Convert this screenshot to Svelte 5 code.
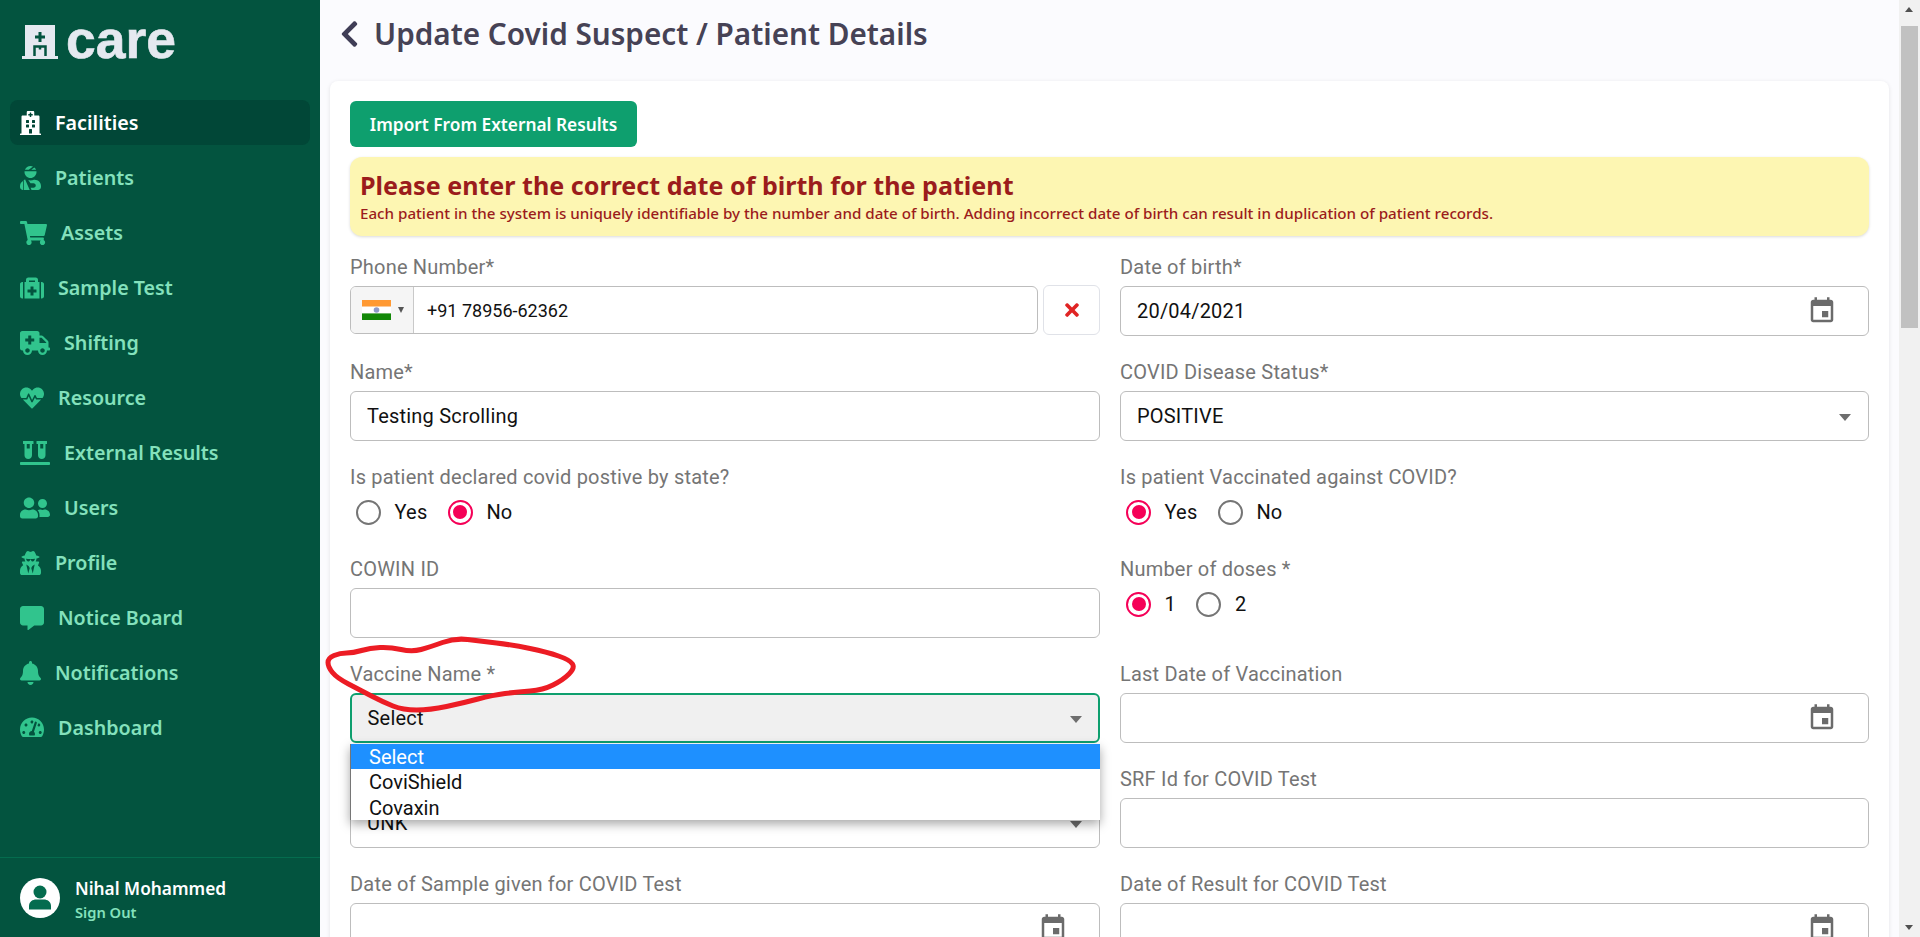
<script>
  const nav = [
    { label: 'Facilities', w: 448, active: true, d: 'M448 492v20H0v-20c0-6.627 5.373-12 12-12h20V120c0-13.255 10.745-24 24-24h88V24c0-13.255 10.745-24 24-24h112c13.255 0 24 10.745 24 24v72h88c13.255 0 24 10.745 24 24v360h20c6.627 0 12 5.373 12 12zM308 192h-40c-6.627 0-12 5.373-12 12v40c0 6.627 5.373 12 12 12h40c6.627 0 12-5.373 12-12v-40c0-6.627-5.373-12-12-12zm-168 64h40c6.627 0 12-5.373 12-12v-40c0-6.627-5.373-12-12-12h-40c-6.627 0-12 5.373-12 12v40c0 6.627 5.373 12 12 12zm104 128h-40c-6.627 0-12 5.373-12 12v84h64v-84c0-6.627-5.373-12-12-12zm64-96h-40c-6.627 0-12 5.373-12 12v40c0 6.627 5.373 12 12 12h40c6.627 0 12-5.373 12-12v-40c0-6.627-5.373-12-12-12zm-116 12c0-6.627-5.373-12-12-12h-40c-6.627 0-12 5.373-12 12v40c0 6.627 5.373 12 12 12h40c6.627 0 12-5.373 12-12v-40zM182 96h26v26a6 6 0 0 0 6 6h20a6 6 0 0 0 6-6V96h26a6 6 0 0 0 6-6V70a6 6 0 0 0-6-6h-26V38a6 6 0 0 0-6-6h-20a6 6 0 0 0-6 6v26h-26a6 6 0 0 0-6 6v20a6 6 0 0 0 6 6z' },
    { label: 'Patients', w: 448, d: 'M277.37 11.98C261.08 4.47 243.11 0 224 0c-53.69 0-99.5 33.13-118.51 80h81.19l90.69-68.02zM342.51 80c-7.9-19.47-20.67-36.2-36.49-49.52L239.99 80h102.52zM224 256c70.69 0 128-57.31 128-128 0-5.48-.95-10.7-1.61-16H97.61c-.67 5.3-1.61 10.52-1.61 16 0 70.69 57.31 128 128 128zM80 299.7V512h128.26l-98.45-221.52C99.5 292 89.5 295 80 299.7zM0 448c0 35.35 28.65 64 64 64V318.7C26.38 339.4 0 379.2 0 426.02V448zm246.68 64H384c35.35 0 64-28.65 64-64v-21.98c0-74.16-60.12-134.02-134.4-134.02h-16.7c-22.2 10.2-46.9 16-72.9 16-16.6 0-32.6-2.4-47.8-6.8L224 368h64c26.5 0 48 21.5 48 48s-21.5 48-48 48h-62.6z' },
    { label: 'Assets', w: 576, d: 'M528.12 301.319l47.273-208C578.806 78.301 567.391 64 551.99 64H159.208l-9.166-44.81C147.758 8.021 137.93 0 126.529 0H24C10.745 0 0 10.745 0 24v16c0 13.255 10.745 24 24 24h69.883l70.248 343.435C147.325 417.1 136 435.222 136 456c0 30.928 25.072 56 56 56s56-25.072 56-56c0-15.674-6.447-29.835-16.824-40h209.647C430.447 426.165 424 440.326 424 456c0 30.928 25.072 56 56 56s56-25.072 56-56c0-22.172-12.888-41.332-31.579-50.405l5.517-24.276c3.413-15.018-8.002-29.319-23.403-29.319H218.117l-6.545-32h293.145c11.206 0 20.92-7.754 23.403-18.681z' },
    { label: 'Sample Test', w: 512, d: 'M96 480h320V128h-32V80c0-26.51-21.49-48-48-48H176c-26.51 0-48 21.49-48 48v48H96v352zm96-384h128v32H192V96zm160 248c0 4.418-3.582 8-8 8h-56v56c0 4.418-3.582 8-8 8h-48c-4.418 0-8-3.582-8-8v-56h-56c-4.418 0-8-3.582-8-8v-48c0-4.418 3.582-8 8-8h56v-56c0-4.418 3.582-8 8-8h48c4.418 0 8 3.582 8 8v56h56c4.418 0 8 3.582 8 8v48zm160-216v304c0 26.51-21.49 48-48 48h-16V128h16c26.51 0 48 21.49 48 48zM48 128h16v352H48c-26.51 0-48-21.49-48-48V176c0-26.51 21.49-48 48-48z' },
    { label: 'Shifting', w: 640, d: 'M624 352h-16V243.9c0-12.7-5.1-24.9-14.1-33.9L494 110.1c-9-9-21.2-14.1-33.9-14.1H416V48c0-26.5-21.5-48-48-48H48C21.5 0 0 21.5 0 48v320c0 26.5 21.5 48 48 48h16c0 53 43 96 96 96s96-43 96-96h128c0 53 43 96 96 96s96-43 96-96h48c8.8 0 16-7.2 16-16v-32c0-8.8-7.2-16-16-16zM160 464c-26.5 0-48-21.5-48-48s21.5-48 48-48 48 21.5 48 48-21.5 48-48 48zm144-248c0 4.4-3.6 8-8 8h-56v56c0 4.4-3.6 8-8 8h-48c-4.4 0-8-3.6-8-8v-56h-56c-4.4 0-8-3.6-8-8v-48c0-4.4 3.6-8 8-8h56v-56c0-4.4 3.6-8 8-8h48c4.4 0 8 3.6 8 8v56h56c4.4 0 8 3.6 8 8v48zm176 248c-26.5 0-48-21.5-48-48s21.5-48 48-48 48 21.5 48 48-21.5 48-48 48zm80-208H416V144h44.1l99.9 99.9V256z' },
    { label: 'Resource', w: 512, d: 'M320.2 243.8l-49.7 99.4c-6 12.1-23.4 11.7-28.9-.6l-56.9-126.3-30 71.7H60.6l182.5 186.5c7.1 7.3 18.6 7.3 25.7 0L451.4 288H342.3l-22.1-44.2zM473.7 73.9l-2.4-2.5c-51.5-52.6-135.8-52.6-187.4 0L256 100l-27.9-28.5c-51.5-52.7-135.9-52.7-187.4 0l-2.4 2.4C-10.4 123.7-12.5 203 31 256h102.4l35.9-86.2c5.4-12.9 23.6-13.2 29.4-.4l58.2 129.3 49-97.9c5.9-11.8 22.7-11.8 28.6 0l27.6 55.2H481c43.5-53 41.4-132.3-7.3-182.1z' },
    { label: 'External Results', w: 640, d: 'M72 64h24v240c0 44.1 35.9 80 80 80s80-35.9 80-80V64h24c4.4 0 8-3.6 8-8V8c0-4.4-3.6-8-8-8H72c-4.4 0-8 3.6-8 8v48c0 4.4 3.6 8 8 8zm72 0h64v96h-64V64zm480 384H16c-8.8 0-16 7.2-16 16v32c0 8.8 7.2 16 16 16h608c8.8 0 16-7.2 16-16v-32c0-8.8-7.2-16-16-16zM360 64h24v240c0 44.1 35.9 80 80 80s80-35.9 80-80V64h24c4.4 0 8-3.6 8-8V8c0-4.4-3.6-8-8-8H360c-4.4 0-8 3.6-8 8v48c0 4.4 3.6 8 8 8zm72 0h64v96h-64V64z' },
    { label: 'Users', w: 640, d: 'M192 256c61.9 0 112-50.1 112-112S253.9 32 192 32 80 82.1 80 144s50.1 112 112 112zm76.8 32h-8.3c-20.8 10-43.9 16-68.5 16s-47.6-6-68.5-16h-8.3C51.6 288 0 339.6 0 403.2V432c0 26.5 21.5 48 48 48h288c26.5 0 48-21.5 48-48v-28.8c0-63.6-51.6-115.2-115.2-115.2zM480 256c53 0 96-43 96-96s-43-96-96-96-96 43-96 96 43 96 96 96zm48 32h-3.8c-13.9 4.8-28.6 8-44.2 8s-30.3-3.2-44.2-8H432c-20.4 0-39.2 5.9-55.7 15.4 24.4 26.3 39.7 61.2 39.7 99.8v38.4c0 2.2-.5 4.3-.6 6.4H592c26.5 0 48-21.5 48-48 0-61.9-50.1-112-112-112z' },
    { label: 'Profile', w: 448, d: 'M383.9 308.3l23.9-62.6c4-10.5-3.7-21.7-15-21.7h-58.5c11-18.9 17.8-40.6 17.8-64v-.3c39.2-7.8 64-19.1 64-31.7 0-13.3-27.3-25.1-70.1-33-9.2-32.8-27-65.8-40.6-82.8-9.5-11.9-25.9-15.6-39.5-8.8l-27.6 13.8c-9 4.5-19.6 4.5-28.6 0L182.1 3.4c-13.6-6.8-30-3.1-39.5 8.8-13.5 17-31.4 50-40.6 82.8-42.7 7.9-70 19.7-70 33 0 12.6 24.8 23.9 64 31.7v.3c0 23.4 6.8 45.1 17.8 64H56.3c-11.5 0-19.2 11.7-14.7 22.3l25.8 60.2C27.3 329.8 0 372.7 0 422.4v44.8C0 491.9 20.1 512 44.8 512h358.4c24.7 0 44.8-20.1 44.8-44.8v-44.8c0-48.4-25.8-90.4-64.1-114.1zM176 480l-41.6-192 49.6 32 24 40-32 120zm96 0l-32-120 24-40 49.6-32L272 480zm41.7-298.5c-3.9 11.9-7 24.6-16.5 33.4-10.1 9.3-48 22.4-64-25-2.8-8.4-15.4-8.4-18.3 0-17 50.2-56 32.4-64 25-9.5-8.8-12.7-21.5-16.5-33.4-.8-2.5-6.3-5.7-6.3-5.8v-10.8c28.3 3.6 61 5.8 96 5.8s67.7-2.1 96-5.8v10.8c-.1.1-5.6 3.2-6.4 5.8z' },
    { label: 'Notice Board', w: 512, d: 'M448 0H64C28.7 0 0 28.7 0 64v288c0 35.3 28.7 64 64 64h96v84c0 9.8 11.2 15.5 19.1 9.7L304 416h144c35.3 0 64-28.7 64-64V64c0-35.3-28.7-64-64-64z' },
    { label: 'Notifications', w: 448, d: 'M224 512c35.32 0 63.97-28.65 63.97-64H160.03c0 35.35 28.65 64 63.97 64zm215.39-149.71c-19.32-20.76-55.47-51.99-55.47-154.29 0-77.7-54.48-139.9-127.94-155.16V32c0-17.67-14.32-32-31.98-32s-31.98 14.33-31.98 32v20.84C118.56 68.1 64.08 130.3 64.08 208c0 102.3-36.15 133.53-55.47 154.29-6 6.45-8.66 14.16-8.61 21.71.11 16.4 12.98 32 32.1 32h383.8c19.12 0 32-15.6 32.1-32 .05-7.55-2.61-15.27-8.61-21.71z' },
    { label: 'Dashboard', w: 512, d: 'M256 32C114.6 32 0 146.6 0 288c0 52.800 14.250 100 39.060 144.800 5.610 9.620 16.300 15.200 27.440 15.200h379c11.140 0 21.830-5.580 27.440-15.200C497.750 388 512 340.800 512 288 512 146.600 397.400 32 256 32zm0 64c14.710 0 26.580 10.130 30.320 23.650-1.110 2.260-2.640 4.230-3.450 6.670l-9.220 27.670c-5.130 3.490-10.970 6.010-17.640 6.010-17.670 0-32-14.330-32-32S238.330 96 256 96zM80 384c-17.670 0-32-14.330-32-32s14.330-32 32-32 32 14.330 32 32-14.330 32-32 32zm48-160c-17.670 0-32-14.330-32-32s14.330-32 32-32 32 14.330 32 32-14.330 32-32 32zm230.770-72.410l-61.330 184C311.130 347.330 320 364.540 320 384c0 11.720-3.380 22.550-8.880 32H200.880c-5.500-9.450-8.880-20.280-8.880-32 0-33.940 26.500-61.430 59.900-63.590l61.340-184.010c4.170-12.560 17.730-19.450 30.360-15.170 12.570 4.190 19.350 17.790 15.170 30.360zm14.660 57.200l15.520-46.550c3.470-1.290 7.130-2.230 11.050-2.230 17.670 0 32 14.330 32 32s-14.330 32-32 32c-11.380-.010-20.890-6.280-26.570-15.220zM432 384c-17.670 0-32-14.330-32-32s14.330-32 32-32 32 14.330 32 32-14.330 32-32 32z' }
  ];

  const scribblePts = [[328,658],[340,653],[353,653],[370,648],[390,647],[412,652],[430,647],[455,638],[480,641],[513,645],[547,652],[570,660],[575,668],[563,680],[543,690],[517,692],[493,695],[463,703],[430,710],[403,710],[383,702],[360,690],[337,678],[328,667]];
  const n = scribblePts.length;
  const mid = (a, b) => [(a[0] + b[0]) / 2, (a[1] + b[1]) / 2];
  const start = mid(scribblePts[n - 1], scribblePts[0]);
  const scribble = `M${start[0]} ${start[1]} ` + scribblePts.map((p, i) => {
    const m = mid(p, scribblePts[(i + 1) % n]);
    return `Q${p[0]} ${p[1]} ${m[0]} ${m[1]}`;
  }).join(' ') + ' Z';

  const calendarPath = 'M17 12h-5v5h5v-5zM16 1v2H8V1H6v2H5c-1.11 0-1.99.9-1.99 2L3 19c0 1.1.89 2 2 2h14c1.1 0 2-.9 2-2V5c0-1.1-.9-2-2-2h-1V1h-2zm3 18H5V8h14v11z';
</script>

{#snippet calendar()}
  <svg class="cal" viewBox="0 0 24 24" aria-hidden="true"><path d={calendarPath} /></svg>
{/snippet}

{#snippet caret()}
  <span class="caret"></span>
{/snippet}

{#snippet radio(on, text)}
  <span class="radio-item">
    <span class="radio" class:on={on}></span>
    <span class="radio-text">{text}</span>
  </span>
{/snippet}

<div class="page">
  <aside class="sidebar">
    <div class="logo">
      <svg class="logo-mark" viewBox="0 0 36 34" aria-hidden="true">
        <path fill="#e5e9f0" d="M3 0h30v31h3v3H0v-3h3z" />
        <path fill="#03543f" d="M16.500 7h3v3.500H23v3h-3.500V17h-3v-3.500H13v-3h3.500z" />
        <path fill="none" stroke="#03543f" stroke-width="2.500" d="M12.500 31v-9.500h11V31M18 21.500v3" />
      </svg>
      <span class="logo-text">care</span>
    </div>
    <nav class="nav">
      {#each nav as item}
        <div class="nav-item" class:active={item.active}>
          <svg class="nav-icon" viewBox="0 0 {item.w} 512" width={item.w * 24 / 512} height="24" aria-hidden="true"><path d={item.d} /></svg>
          <span>{item.label}</span>
        </div>
      {/each}
    </nav>
    <div class="account">
      <svg class="avatar" viewBox="0 0 40 40" aria-hidden="true">
        <circle cx="20" cy="20" r="20" fill="#fff" />
        <circle cx="20" cy="14" r="6.500" fill="#046c4e" />
        <path fill="#046c4e" d="M9 28c0-4.500 4-6.500 7-6.500h8c3 0 7 2 7 6.500v3.500H9z" />
      </svg>
      <div class="account-text">
        <div class="account-name">Nihal Mohammed</div>
        <div class="account-out">Sign Out</div>
      </div>
    </div>
  </aside>

  <main class="main">
    <header class="head">
      <svg class="back" viewBox="0 0 320 512" aria-hidden="true"><path d="M34.520 239.030L228.870 44.690c9.370-9.370 24.570-9.370 33.940 0l22.670 22.670c9.360 9.360 9.370 24.520.04 33.900L131.490 256l154.020 154.750c9.340 9.380 9.320 24.540-.04 33.900l-22.670 22.670c-9.370 9.370-24.570 9.370-33.940 0L34.520 272.970c-9.370-9.370-9.370-24.570 0-33.940z" /></svg>
      <h1>Update Covid Suspect / Patient Details</h1>
    </header>

    <section class="card">
      <button class="import" type="button">Import From External Results</button>
      <div class="alert">
        <div class="alert-title">Please enter the correct date of birth for the patient</div>
        <div class="alert-sub">Each patient in the system is uniquely identifiable by the number and date of birth. Adding incorrect date of birth can result in duplication of patient records.</div>
      </div>

      <div class="form">
        <div class="field">
          <div class="label">Phone Number*</div>
          <div class="phone-row">
            <div class="phone">
              <div class="flag-box">
                <svg class="flag" viewBox="0 0 29 20" aria-hidden="true">
                  <rect width="29" height="6.700" fill="#ff9933" />
                  <rect y="6.700" width="29" height="6.700" fill="#fff" />
                  <rect y="13.400" width="29" height="6.600" fill="#138808" />
                  <circle cx="14.500" cy="10" r="2.800" fill="#8f9ac9" />
                </svg>
                <span class="flag-caret"></span>
              </div>
              <span class="phone-num">+91 78956-62362</span>
            </div>
            <div class="clear">
              <svg viewBox="0 0 352 512" aria-hidden="true"><path d="M242.720 256l100.070-100.070c12.280-12.280 12.280-32.190 0-44.480l-22.240-22.240c-12.280-12.280-32.190-12.280-44.480 0L176 189.280 75.930 89.210c-12.280-12.280-32.190-12.280-44.480 0L9.210 111.450c-12.280 12.280-12.280 32.190 0 44.480L109.280 256 9.210 356.070c-12.280 12.280-12.280 32.190 0 44.480l22.240 22.240c12.280 12.280 32.200 12.280 44.480 0L176 322.720l100.070 100.070c12.280 12.280 32.200 12.280 44.480 0l22.240-22.240c12.280-12.280 12.280-32.190 0-44.480L242.720 256z" /></svg>
            </div>
          </div>
        </div>
        <div class="field">
          <div class="label">Date of birth*</div>
          <div class="input">20/04/2021{@render calendar()}</div>
        </div>

        <div class="field">
          <div class="label">Name*</div>
          <div class="input">Testing Scrolling</div>
        </div>
        <div class="field">
          <div class="label">COVID Disease Status*</div>
          <div class="input">POSITIVE{@render caret()}</div>
        </div>

        <div class="field radio-field">
          <div class="label">Is patient declared covid postive by state?</div>
          <div class="radios">
            {@render radio(false, 'Yes')}
            {@render radio(true, 'No')}
          </div>
        </div>
        <div class="field radio-field">
          <div class="label">Is patient Vaccinated against COVID?</div>
          <div class="radios">
            {@render radio(true, 'Yes')}
            {@render radio(false, 'No')}
          </div>
        </div>

        <div class="field">
          <div class="label">COWIN ID</div>
          <div class="input"></div>
        </div>
        <div class="field radio-field">
          <div class="label">Number of doses *</div>
          <div class="radios">
            {@render radio(true, '1')}
            {@render radio(false, '2')}
          </div>
        </div>

        <div class="field">
          <div class="label">Vaccine Name *</div>
          <div class="select-wrap">
            <div class="input focused">Select{@render caret()}</div>
            <div class="dropdown">
              <div class="option selected">Select</div>
              <div class="option">CoviShield</div>
              <div class="option">Covaxin</div>
            </div>
          </div>
        </div>
        <div class="field">
          <div class="label">Last Date of Vaccination</div>
          <div class="input">{@render calendar()}</div>
        </div>

        <div class="field">
          <div class="label">&nbsp;</div>
          <div class="input">UNK{@render caret()}</div>
        </div>
        <div class="field">
          <div class="label">SRF Id for COVID Test</div>
          <div class="input"></div>
        </div>

        <div class="field">
          <div class="label">Date of Sample given for COVID Test</div>
          <div class="input">{@render calendar()}</div>
        </div>
        <div class="field">
          <div class="label">Date of Result for COVID Test</div>
          <div class="input">{@render calendar()}</div>
        </div>
      </div>
    </section>
  </main>

  <div class="scrollbar">
    <div class="arrow up"></div>
    <div class="track"><div class="thumb"></div></div>
    <div class="arrow down"></div>
  </div>

  <svg class="scribble" viewBox="0 0 1920 937" aria-hidden="true">
    <path d={scribble} fill="none" stroke="#ec1c24" stroke-width="5" stroke-linejoin="round" />
  </svg>
</div>

<style>
  :global(body) {
    margin: 0;
    overflow: hidden;
  }
  * {
    box-sizing: border-box;
  }
  .page {
    position: relative;
    display: flex;
    width: 1920px;
    height: 937px;
    overflow: hidden;
    font-family: Roboto, sans-serif;
  }

  /* Sidebar */
  .sidebar {
    flex: 0 0 320px;
    display: flex;
    flex-direction: column;
    background: #03543f;
    font-family: "Noto Sans", sans-serif;
  }
  .logo {
    display: flex;
    align-items: center;
    gap: 8px;
    height: 100px;
    padding: 0 0 16px 22px;
  }
  .logo-mark {
    width: 36px;
    height: 34px;
  }
  .logo-text {
    font-family: "Liberation Sans", sans-serif;
    font-weight: 700;
    font-size: 53.500px;
    line-height: 40px;
    color: #e5e9f0;
    -webkit-text-stroke: 0.6px #e5e9f0;
    position: relative;
    top: -2px;
  }
  .nav {
    flex: 1;
    display: flex;
    flex-direction: column;
    gap: 10px;
    padding: 0 10px;
  }
  .nav-item {
    display: flex;
    align-items: center;
    gap: 14px;
    height: 45px;
    padding: 0 10px;
    border-radius: 8px;
    font-size: 19.700px;
    font-weight: 600;
    color: #84e1bc;
  }
  .nav-item.active {
    background: #014737;
    color: #fff;
  }
  .nav-icon {
    flex: none;
    fill: #31c48d;
  }
  .nav-item.active .nav-icon {
    fill: #fff;
  }
  .account {
    display: flex;
    align-items: center;
    gap: 15px;
    height: 80px;
    padding: 0 20px;
    border-top: 1px solid #046c4e;
  }
  .avatar {
    width: 40px;
    height: 40px;
    flex: none;
  }
  .account-text {
    padding-top: 4px;
  }
  .account-name {
    font-size: 17.300px;
    line-height: 24px;
    font-weight: 600;
    color: #fff;
  }
  .account-out {
    font-size: 14.700px;
    line-height: 20px;
    font-weight: 600;
    color: #84e1bc;
    margin-top: 1px;
  }

  /* Main */
  .main {
    flex: 1;
    min-width: 0;
    background: #fbfbfe;
    overflow: hidden;
    padding: 0 10px;
  }
  .head {
    display: flex;
    align-items: center;
    gap: 15px;
    height: 68px;
    padding-left: 10px;
    margin-bottom: 13px;
  }
  .back {
    width: 19px;
    height: 30px;
    fill: #3f3d56;
    flex: none;
  }
  h1 {
    margin: 0;
    font-family: "Noto Sans", sans-serif;
    font-size: 29.700px;
    font-weight: 600;
    color: #464255;
    line-height: 40px;
  }
  .card {
    background: #fff;
    border-radius: 8px;
    box-shadow: 0 1px 4px rgba(0, 0, 0, 0.1);
    padding: 20px 20px 0;
    height: 900px;
  }
  .import {
    display: block;
    width: 287px;
    height: 46px;
    border: 0;
    border-radius: 6px;
    background: #0e9f6e;
    color: #fff;
    font-family: "Noto Sans", sans-serif;
    font-size: 17.300px;
    font-weight: 600;
  }
  .alert {
    margin-top: 10px;
    height: 79px;
    padding: 11px 10px 0 10px;
    border-radius: 12px;
    background: #fdf6b2;
    box-shadow: 0 1px 3px rgba(0, 0, 0, 0.15);
    font-family: "Noto Sans", sans-serif;
    color: #9b1c1c;
  }
  .alert-title {
    font-size: 25.100px;
    line-height: 35px;
    font-weight: 700;
  }
  .alert-sub {
    font-size: 15.160px;
    line-height: 20px;
    font-weight: 500;
  }
  .form {
    margin-top: 18px;
    display: grid;
    grid-template-columns: 750px 749px;
    column-gap: 20px;
    row-gap: 23px;
  }
  .label {
    height: 24px;
    margin-bottom: 8px;
    font-size: 20px;
    letter-spacing: 0.2px;
    line-height: 26px;
    color: #757575;
    white-space: nowrap;
  }
  .input {
    position: relative;
    display: flex;
    align-items: center;
    height: 50px;
    padding: 0 16px;
    background: #fff;
    border: 1px solid #bdbdbd;
    border-radius: 6px;
    font-size: 20px;
    letter-spacing: 0.2px;
    color: #111;
  }
  .input.focused {
    background: #f0f0f0;
    border: 2px solid #0e9f6e;
    padding: 0 15.500px;
  }
  .cal {
    position: absolute;
    right: 31px;
    top: 9px;
    width: 30px;
    height: 30px;
    fill: #6b6b6b;
  }
  .focused .caret {
    top: 21px;
    right: 16px;
  }
  .caret {
    position: absolute;
    right: 17px;
    top: 22px;
    width: 0;
    height: 0;
    border-left: 6.500px solid transparent;
    border-right: 6.500px solid transparent;
    border-top: 7px solid #6e6e6e;
  }
  .phone-row {
    display: flex;
    gap: 5px;
  }
  .phone {
    flex: 1;
    display: flex;
    align-items: center;
    height: 48px;
    border: 1px solid #bdbdbd;
    border-radius: 6px;
    overflow: hidden;
    font-size: 18px;
    color: #111;
  }
  .flag-box {
    display: flex;
    align-items: center;
    gap: 7px;
    height: 100%;
    width: 63px;
    padding-left: 11px;
    background: #f5f5f5;
    border-right: 1px solid #c9c9c9;
    flex: none;
  }
  .flag {
    width: 29px;
    height: 20px;
  }
  .flag-caret {
    width: 0;
    height: 0;
    border-left: 3.500px solid transparent;
    border-right: 3.500px solid transparent;
    border-top: 6px solid #555;
  }
  .phone-num {
    margin-left: 13px;
  }
  .clear {
    flex: 0 0 57px;
    height: 50px;
    margin-top: -1px;
    display: flex;
    align-items: center;
    justify-content: center;
    background: #fff;
    border: 1px solid #e0e2e8;
    border-radius: 6px;
  }
  .clear svg {
    width: 14px;
    height: 20px;
    fill: #e02424;
  }
  .radio-field {
    height: 69px;
  }
  .radios {
    display: flex;
    align-items: center;
    height: 32px;
    padding-left: 6px;
    gap: 20.500px;
  }
  .radio-item {
    display: flex;
    align-items: center;
    gap: 13.500px;
    font-size: 20px;
    letter-spacing: 0.2px;
    color: #111;
  }
  .radio {
    position: relative;
    width: 25px;
    height: 25px;
    border: 2.500px solid #757575;
    border-radius: 50%;
    flex: none;
  }
  .radio.on {
    border-color: #f50057;
  }
  .radio.on::after {
    content: "";
    position: absolute;
    inset: 3.500px;
    border-radius: 50%;
    background: #f50057;
  }
  .select-wrap {
    position: relative;
  }
  .dropdown {
    position: absolute;
    top: 100%;
    left: 0;
    right: 0;
    margin-top: 1px;
    background: #fff;
    border-left: 1px solid #767676;
    box-shadow: 0 4px 10px rgba(0, 0, 0, 0.35);
    z-index: 3;
    font-size: 20px;
    color: #111;
  }
  .option {
    height: 25.300px;
    line-height: 26px;
    padding-left: 18px;
  }
  .option.selected {
    background: #1e90ff;
    color: #fff;
  }

  /* Scrollbar */
  .scrollbar {
    flex: 0 0 21px;
    display: flex;
    flex-direction: column;
    background: #f1f1f1;
    padding: 0 2px;
  }
  .arrow {
    flex: 0 0 26px;
    position: relative;
  }
  .arrow::after {
    content: "";
    position: absolute;
    left: 4px;
    border-left: 4.500px solid transparent;
    border-right: 4.500px solid transparent;
  }
  .arrow.up::after {
    top: 7px;
    border-bottom: 5px solid #505050;
  }
  .arrow.down::after {
    bottom: 7px;
    border-top: 5px solid #505050;
  }
  .track {
    flex: 1;
  }
  .thumb {
    height: 302px;
    background: #c1c1c1;
  }

  .scribble {
    position: absolute;
    inset: 0;
    width: 1920px;
    height: 937px;
    z-index: 5;
    pointer-events: none;
  }
</style>
